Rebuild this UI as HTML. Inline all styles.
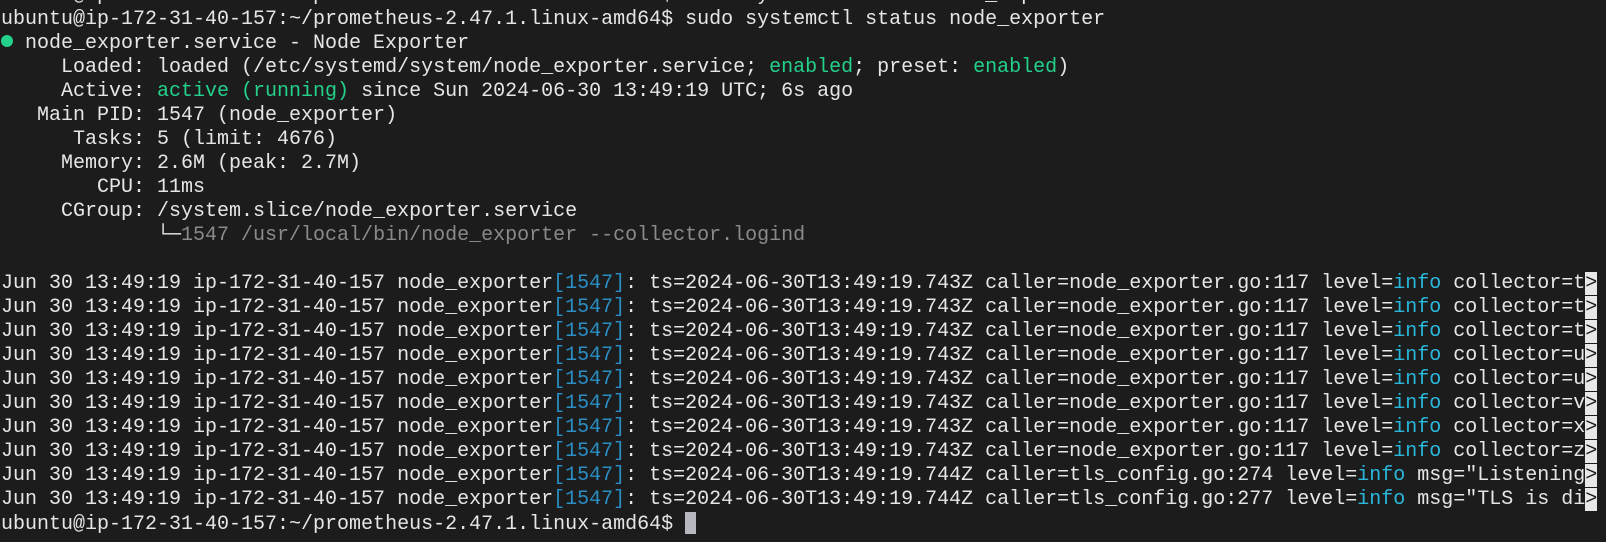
<!DOCTYPE html><html><head><meta charset="utf-8"><style>
html,body{margin:0;padding:0;background:#1c1c1c;width:1606px;height:542px;overflow:hidden}
pre{margin:0;position:absolute;left:1px;top:-16px;font-family:"Liberation Mono",monospace;font-size:20px;line-height:24px;color:#e6e6e6;white-space:pre}
.g{color:#23d18b}.c{color:#29b8db}.b{color:#2a8fc4}.d{color:#8a8a8a}
.r{background:#e8e8e8;color:#1c1c1c}
.dot{display:inline-block;width:12px;height:12px;border-radius:50%;background:#23d18b;vertical-align:1px}
.cur{display:inline-block;width:11px;height:22px;background:#b8b8c0;vertical-align:-5px}
</style></head><body><pre>ubuntu@ip-172-31-40-157:~/prometheus-2.47.1.linux-amd64$ sudo systemctl start node_exporter
ubuntu@ip-172-31-40-157:~/prometheus-2.47.1.linux-amd64$ sudo systemctl status node_exporter
<span class="dot"></span> node_exporter.service - Node Exporter
     Loaded: loaded (/etc/systemd/system/node_exporter.service; <span class="g">enabled</span>; preset: <span class="g">enabled</span>)
     Active: <span class="g">active (running)</span> since Sun 2024-06-30 13:49:19 UTC; 6s ago
   Main PID: 1547 (node_exporter)
      Tasks: 5 (limit: 4676)
     Memory: 2.6M (peak: 2.7M)
        CPU: 11ms
     CGroup: /system.slice/node_exporter.service
             └─<span class="d">1547 /usr/local/bin/node_exporter --collector.logind</span>

Jun 30 13:49:19 ip-172-31-40-157 node_exporter<span class="b">[1547]</span>: ts=2024-06-30T13:49:19.743Z caller=node_exporter.go:117 level=<span class="c">info</span> collector=t<span class="r">&gt;</span>
Jun 30 13:49:19 ip-172-31-40-157 node_exporter<span class="b">[1547]</span>: ts=2024-06-30T13:49:19.743Z caller=node_exporter.go:117 level=<span class="c">info</span> collector=t<span class="r">&gt;</span>
Jun 30 13:49:19 ip-172-31-40-157 node_exporter<span class="b">[1547]</span>: ts=2024-06-30T13:49:19.743Z caller=node_exporter.go:117 level=<span class="c">info</span> collector=t<span class="r">&gt;</span>
Jun 30 13:49:19 ip-172-31-40-157 node_exporter<span class="b">[1547]</span>: ts=2024-06-30T13:49:19.743Z caller=node_exporter.go:117 level=<span class="c">info</span> collector=u<span class="r">&gt;</span>
Jun 30 13:49:19 ip-172-31-40-157 node_exporter<span class="b">[1547]</span>: ts=2024-06-30T13:49:19.743Z caller=node_exporter.go:117 level=<span class="c">info</span> collector=u<span class="r">&gt;</span>
Jun 30 13:49:19 ip-172-31-40-157 node_exporter<span class="b">[1547]</span>: ts=2024-06-30T13:49:19.743Z caller=node_exporter.go:117 level=<span class="c">info</span> collector=v<span class="r">&gt;</span>
Jun 30 13:49:19 ip-172-31-40-157 node_exporter<span class="b">[1547]</span>: ts=2024-06-30T13:49:19.743Z caller=node_exporter.go:117 level=<span class="c">info</span> collector=x<span class="r">&gt;</span>
Jun 30 13:49:19 ip-172-31-40-157 node_exporter<span class="b">[1547]</span>: ts=2024-06-30T13:49:19.743Z caller=node_exporter.go:117 level=<span class="c">info</span> collector=z<span class="r">&gt;</span>
Jun 30 13:49:19 ip-172-31-40-157 node_exporter<span class="b">[1547]</span>: ts=2024-06-30T13:49:19.744Z caller=tls_config.go:274 level=<span class="c">info</span> msg="Listening<span class="r">&gt;</span>
Jun 30 13:49:19 ip-172-31-40-157 node_exporter<span class="b">[1547]</span>: ts=2024-06-30T13:49:19.744Z caller=tls_config.go:277 level=<span class="c">info</span> msg="TLS is di<span class="r">&gt;</span>
ubuntu@ip-172-31-40-157:~/prometheus-2.47.1.linux-amd64$ <span class="cur"></span></pre></body></html>
